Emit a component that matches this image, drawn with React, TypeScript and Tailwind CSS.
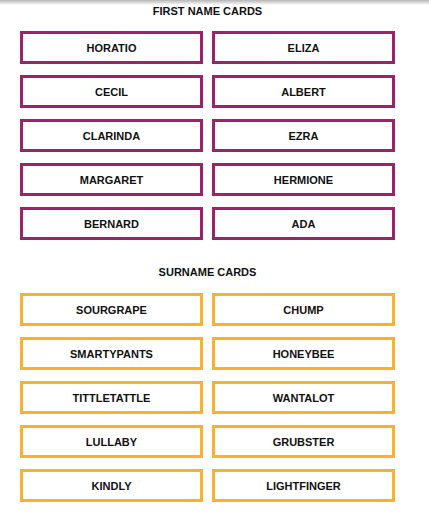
const firstNames = ["HORATIO", "ELIZA", "CECIL", "ALBERT", "CLARINDA", "EZRA", "MARGARET", "HERMIONE", "BERNARD", "ADA"]

const surnames = ["SOURGRAPE", "CHUMP", "SMARTYPANTS", "HONEYBEE", "TITTLETATTLE", "WANTALOT", "LULLABY", "GRUBSTER", "KINDLY", "LIGHTFINGER"]

function CardGrid({ names, border }: { names: string[]; border: string }) {
  return (
    <div className="ml-[20px] grid w-[375px] grid-cols-2 gap-x-[9px] gap-y-[11px]">
      {names.map((name) => (
        <div
          key={name}
          className={`flex h-[33px] items-center justify-center border-[3px] bg-white pt-[2px] text-[11px] font-bold leading-none text-[#111] ${border}`}
        >
          {name}
        </div>
      ))}
    </div>
  )
}

export default function App() {
  return (
    <div
      className="relative h-[516px] w-[429px] overflow-hidden bg-white"
      style={{ fontFamily: '"Liberation Sans", Arial, sans-serif' }}
    >
      <div className="absolute inset-x-0 top-0 h-[5px] bg-gradient-to-b from-[#b5b5b5] to-white" />

      <h2 className="ml-[20px] mt-[6px] w-[375px] text-center text-[11px] font-bold leading-none text-[#111]">
        FIRST NAME CARDS
      </h2>
      <div className="mt-[14px]">
        <CardGrid names={firstNames} border="border-[#9c226a]" />
      </div>

      <h2 className="ml-[20px] mt-[27px] w-[375px] text-center text-[11px] font-bold leading-none text-[#111]">
        SURNAME CARDS
      </h2>
      <div className="mt-[15px]">
        <CardGrid names={surnames} border="border-[#fbb12f]" />
      </div>
    </div>
  )
}
